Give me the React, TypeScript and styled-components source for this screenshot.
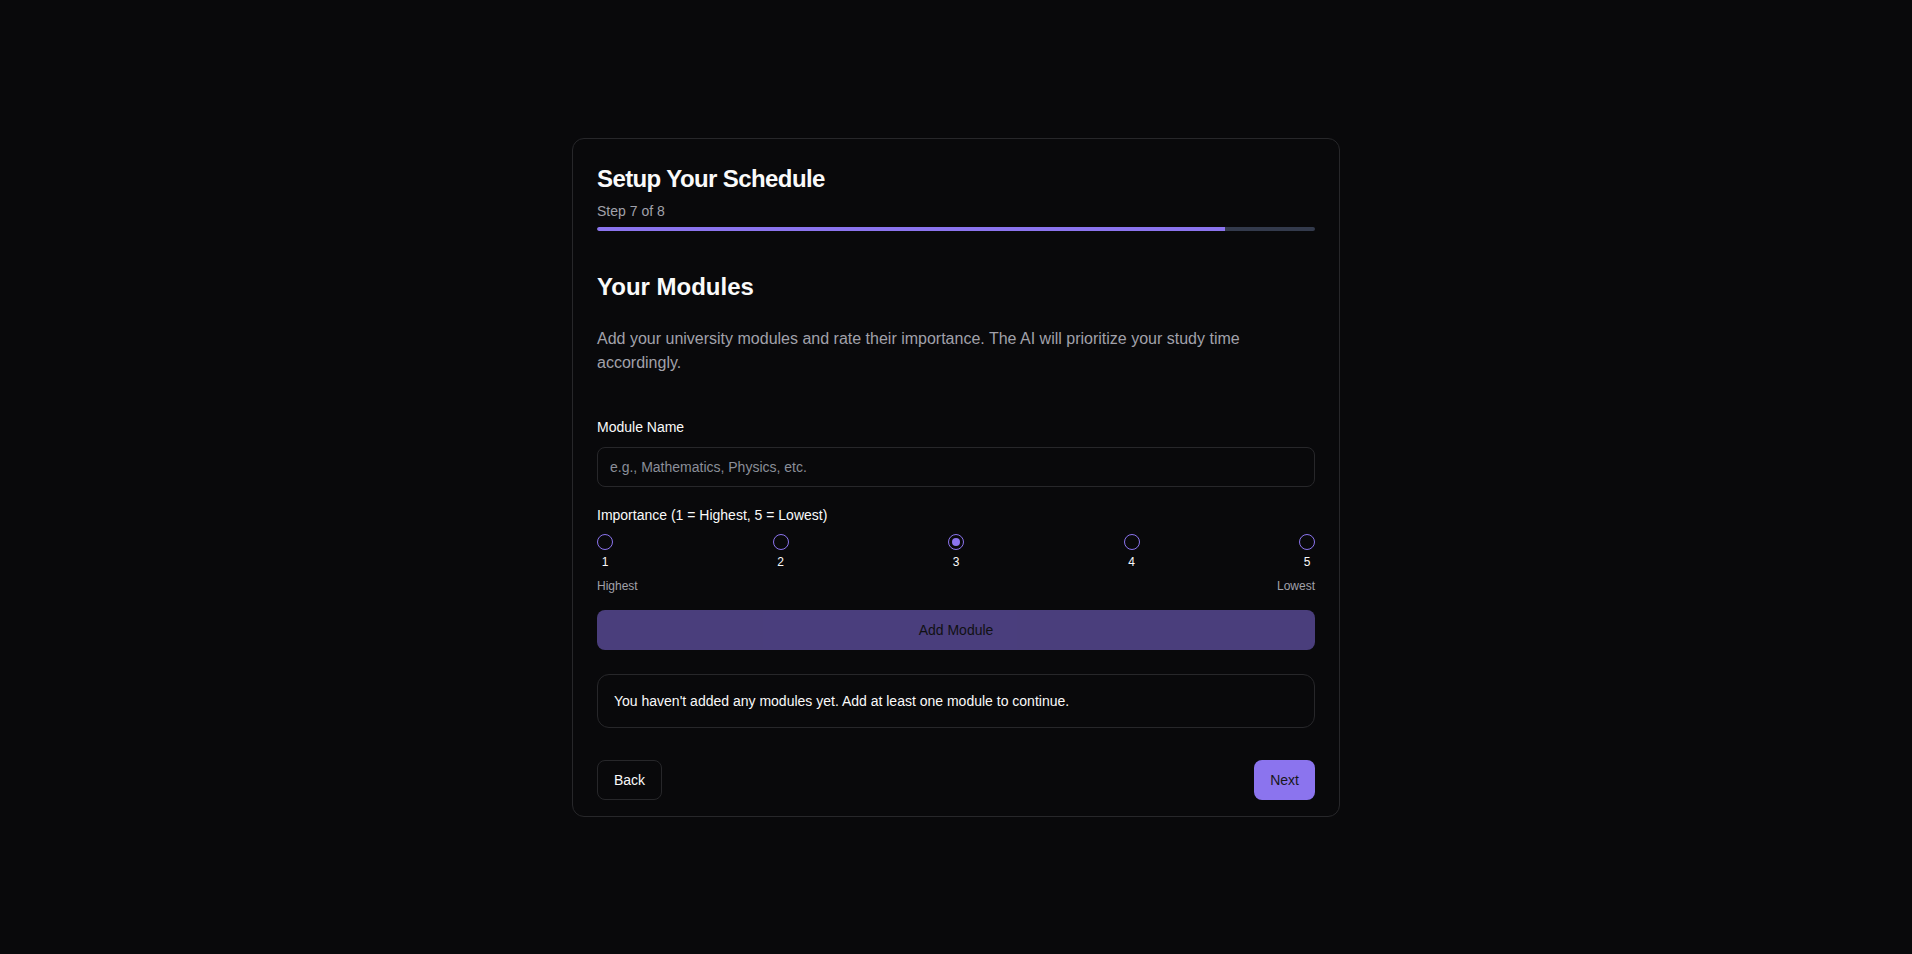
import { useState } from "react";
import styled, { createGlobalStyle } from "styled-components";

const GlobalStyle = createGlobalStyle`
  * { box-sizing: border-box; }
  body {
    margin: 0;
    background: #09090b;
    color: #fafafa;
    font-family: "Liberation Sans", Arial, sans-serif;
  }
`;

const Page = styled.div`
  min-height: 100vh;
  display: flex;
  align-items: center;
  justify-content: center;
`;

const Card = styled.div`
  width: 768px;
  border: 1px solid #27272a;
  border-radius: 12px;
  background: #09090b;
  padding: 24px 24px 16px;
  display: flex;
  flex-direction: column;
`;

const Title = styled.h1`
  margin: 0;
  font-size: 24px;
  line-height: 32px;
  font-weight: 700;
  letter-spacing: -0.6px;
`;

const StepText = styled.p`
  margin: 6px 0 0;
  font-size: 14px;
  line-height: 20px;
  color: #a1a1aa;
`;

const Track = styled.div`
  margin-top: 6px;
  height: 4px;
  border-radius: 999px;
  background: #333a4c;
  overflow: hidden;
`;

const Fill = styled.div`
  height: 100%;
  background: #8b74ee;
  border-radius: 999px 0 0 999px;
`;

const Heading = styled.h2`
  margin: 40px 0 0;
  font-size: 24px;
  line-height: 32px;
  font-weight: 700;
`;

const Description = styled.p`
  margin: 24px 0 0;
  font-size: 16px;
  line-height: 24px;
  color: #a1a1aa;
`;

const Label = styled.label<{ $top: number }>`
  display: block;
  margin-top: ${(p) => p.$top}px;
  font-size: 14px;
  line-height: 20px;
  font-weight: 500;
  color: #fafafa;
`;

const Input = styled.input`
  display: block;
  width: 100%;
  height: 40px;
  margin-top: 10px;
  padding: 0 12px;
  border: 1px solid #27272a;
  border-radius: 8px;
  background: transparent;
  color: #fafafa;
  font-family: inherit;
  font-size: 14px;
  outline: none;

  &::placeholder {
    color: #8b8f99;
  }
`;

const RadioRow = styled.div`
  margin-top: 9px;
  display: flex;
  justify-content: space-between;
`;

const RadioItem = styled.label`
  width: 16px;
  display: flex;
  flex-direction: column;
  align-items: center;
  gap: 4px;
  cursor: pointer;
`;

const Circle = styled.span<{ $checked: boolean }>`
  width: 16px;
  height: 16px;
  border-radius: 50%;
  border: 1px solid #8b74ee;
  display: flex;
  align-items: center;
  justify-content: center;

  &::after {
    content: "";
    width: 8px;
    height: 8px;
    border-radius: 50%;
    background: #8b74ee;
    display: ${(p) => (p.$checked ? "block" : "none")};
  }
`;

const RadioNum = styled.span`
  font-size: 12px;
  line-height: 16px;
  font-weight: 500;
  color: #fafafa;
`;

const ScaleEnds = styled.div`
  margin-top: 8px;
  display: flex;
  justify-content: space-between;
  font-size: 12px;
  line-height: 16px;
  color: #a1a1aa;
`;

const Button = styled.button<{ $variant: "primary" | "outline"; $full?: boolean }>`
  height: 40px;
  padding: 0 16px;
  border-radius: 8px;
  font-family: inherit;
  font-size: 14px;
  cursor: pointer;
  width: ${(p) => (p.$full ? "100%" : "auto")};
  border: ${(p) => (p.$variant === "primary" ? "none" : "1px solid #27272a")};
  background: ${(p) => (p.$variant === "primary" ? "#8b74ee" : "transparent")};
  color: ${(p) => (p.$variant === "primary" ? "#18181b" : "#fafafa")};

  &:disabled {
    opacity: 0.5;
    cursor: default;
  }
`;

const AddButton = styled(Button)`
  margin-top: 16px;
`;

const EmptyBox = styled.div`
  margin-top: 24px;
  padding: 16px;
  border: 1px solid #27272a;
  border-radius: 12px;
  font-size: 14px;
  line-height: 20px;
  color: #fafafa;
`;

const Footer = styled.div`
  margin-top: 32px;
  display: flex;
  justify-content: space-between;
`;

export default function App() {
  const [name, setName] = useState("");
  const [importance, setImportance] = useState(3);
  const step = 7;
  const total = 8;

  return (
    <>
      <GlobalStyle />
      <Page>
        <Card>
          <Title>Setup Your Schedule</Title>
          <StepText>
            Step {step} of {total}
          </StepText>
          <Track>
            <Fill style={{ width: `${(step / total) * 100}%` }} />
          </Track>

          <Heading>Your Modules</Heading>
          <Description>
            Add your university modules and rate their importance. The AI will prioritize your
            study time accordingly.
          </Description>

          <Label $top={42} htmlFor="module-name">
            Module Name
          </Label>
          <Input
            id="module-name"
            placeholder="e.g., Mathematics, Physics, etc."
            value={name}
            onChange={(e) => setName(e.target.value)}
          />

          <Label $top={18}>Importance (1 = Highest, 5 = Lowest)</Label>
          <RadioRow>
            {[1, 2, 3, 4, 5].map((n) => (
              <RadioItem key={n} onClick={() => setImportance(n)}>
                <Circle $checked={importance === n} />
                <RadioNum>{n}</RadioNum>
              </RadioItem>
            ))}
          </RadioRow>
          <ScaleEnds>
            <span>Highest</span>
            <span>Lowest</span>
          </ScaleEnds>

          <AddButton $variant="primary" $full disabled={!name.trim()}>
            Add Module
          </AddButton>

          <EmptyBox>
            You haven't added any modules yet. Add at least one module to continue.
          </EmptyBox>

          <Footer>
            <Button $variant="outline">Back</Button>
            <Button $variant="primary">Next</Button>
          </Footer>
        </Card>
      </Page>
    </>
  );
}
